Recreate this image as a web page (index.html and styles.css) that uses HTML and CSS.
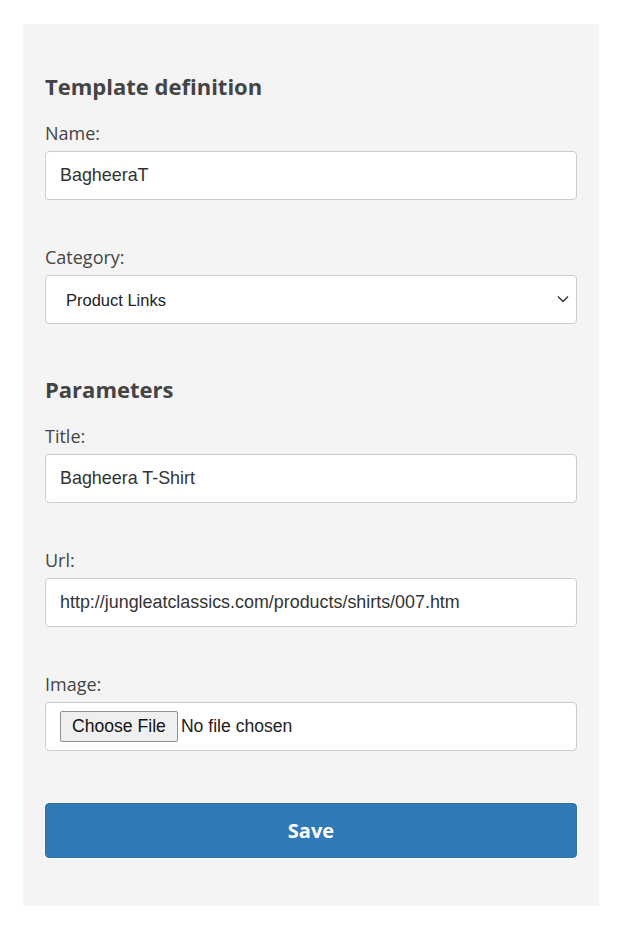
FILE: index.html
```html
<!DOCTYPE html>
<html>
<head>
<meta charset="utf-8">
<link rel="stylesheet" href="styles.css">
</head>
<body>
<div class="panel">
  <form class="form">
    <h2 class="heading">Template definition</h2>
    <div class="field">
      <label class="label">Name:</label>
      <input class="control" type="text" value="BagheeraT">
    </div>
    <div class="field">
      <label class="label">Category:</label>
      <div class="select-wrap">
        <select class="control select">
          <option>Product Links</option>
        </select>
        <svg class="chevron" width="12" height="8" viewBox="0 0 12 8"><path d="M1 1.5 L6 6.5 L11 1.5" fill="none" stroke="#333" stroke-width="1.4"/></svg>
      </div>
    </div>
    <h2 class="heading heading-params">Parameters</h2>
    <div class="field">
      <label class="label">Title:</label>
      <input class="control" type="text" value="Bagheera T-Shirt">
    </div>
    <div class="field">
      <label class="label">Url:</label>
      <input class="control" type="text" value="http://jungleatclassics.com/products/shirts/007.htm">
    </div>
    <div class="field">
      <label class="label">Image:</label>
      <div class="control file-box"><input class="file" type="file"></div>
    </div>
    <button class="save" type="button">Save</button>
  </form>
</div>
</body>
</html>
```
FILE: styles.css
```css
html, body {
  margin: 0;
  padding: 0;
  background: #ffffff;
}
body {
  padding: 24px 23px 24px 23px;
}
.panel {
  width: 576px;
  background: #f4f4f4;
  box-sizing: border-box;
  padding: 48px 22px 48px 22px;
}
.form {
  display: flex;
  flex-direction: column;
}
.heading {
  margin: 0;
  font-family: "Open Sans", sans-serif;
  font-weight: 700;
  font-size: 22px;
  line-height: 28px;
  color: #444444;
}
.heading-params {
  margin-top: 51px;
}
.field {
  display: flex;
  flex-direction: column;
  margin-top: 21px;
}
.field + .field {
  margin-top: 45px;
}
.label {
  font-family: "Open Sans", sans-serif;
  font-size: 18px;
  line-height: 24px;
  color: #444444;
  margin-bottom: 6px;
}
.control {
  box-sizing: border-box;
  width: 532px;
  height: 49px;
  border: 1px solid #cccccc;
  border-radius: 4px;
  background: #ffffff;
  padding: 0 14px;
  font-family: "Liberation Sans", Arial, sans-serif;
  font-size: 17.9px;
  color: #333333;
  outline: none;
}
.select-wrap {
  position: relative;
}
.select {
  appearance: none;
  -webkit-appearance: none;
  padding-left: 20px;
  font-size: 16.5px;
  color: #222222;
}
.chevron {
  position: absolute;
  right: 8px;
  top: 20px;
  pointer-events: none;
}
.file-box {
  display: flex;
  align-items: center;
  padding-left: 14px;
}
.file {
  font-family: "Liberation Sans", Arial, sans-serif;
  font-size: 17.6px;
  color: #222222;
}
.file::file-selector-button {
  font-family: "Liberation Sans", Arial, sans-serif;
  font-size: 17.6px;
  color: #111111;
  height: 31px;
  padding: 0 11px;
  margin-right: 3px;
  background: #efefef;
  border: 1px solid #8f8f8f;
  border-radius: 2px;
}
.save {
  margin-top: 52px;
  width: 532px;
  height: 55px;
  box-sizing: border-box;
  background: #2f7ab7;
  border: 1px solid #2a70aa;
  border-radius: 4px;
  color: #ffffff;
  font-family: "Open Sans", sans-serif;
  font-weight: 700;
  font-size: 20px;
  box-shadow: 0 0 0 1px #ffffff;
}
```
